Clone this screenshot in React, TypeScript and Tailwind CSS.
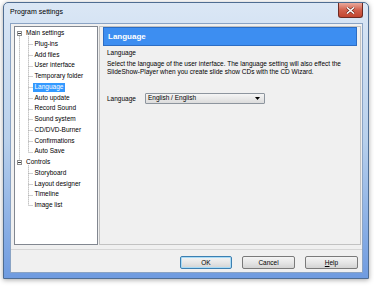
import React from "react";

const MAIN_ITEMS = [
  "Plug-ins",
  "Add files",
  "User interface",
  "Temporary folder",
  "Language",
  "Auto update",
  "Record Sound",
  "Sound system",
  "CD/DVD-Burner",
  "Confirmations",
  "Auto Save",
];

const CONTROL_ITEMS = ["Storyboard", "Layout designer", "Timeline", "Image list"];

const ROW = 10.75;
const TOP = 1;

type Row = { label: string; level: number };

const ROWS: Row[] = [
  { label: "Main settings", level: 0 },
  ...MAIN_ITEMS.map((label) => ({ label, level: 1 })),
  { label: "Controls", level: 0 },
  ...CONTROL_ITEMS.map((label) => ({ label, level: 1 })),
];

const cy = (i: number) => TOP + ROW * i + ROW / 2;

function TreeLines() {
  const controlsIdx = MAIN_ITEMS.length + 1;
  const last = ROWS.length - 1;
  const dots = { stroke: "#a3a3a3", strokeWidth: 1, strokeDasharray: "1 1" };
  return (
    <svg className="absolute left-0 top-0 pointer-events-none" width="82" height="217">
      <line x1="4.5" y1={cy(0) + 3} x2="4.5" y2={cy(controlsIdx) - 3} {...dots} />
      <line x1="13.5" y1={cy(0) + 3} x2="13.5" y2={cy(controlsIdx - 1)} {...dots} />
      <line x1="13.5" y1={cy(controlsIdx) + 3} x2="13.5" y2={cy(last)} {...dots} />
      {ROWS.map((r, i) =>
        r.level === 1 ? (
          <line key={i} x1="13.5" y1={Math.round(cy(i)) + 0.5} x2="18" y2={Math.round(cy(i)) + 0.5} {...dots} />
        ) : null
      )}
    </svg>
  );
}

function Tree() {
  return (
    <div className="relative w-[84px] h-[219px] border border-[#828790] bg-white">
      <TreeLines />
      <div className="relative pt-[1px]">
        {ROWS.map((r) =>
          r.level === 0 ? (
            <div key={r.label} className="h-[10.75px] flex items-center">
              <div className="ml-[2px] w-[5px] h-[5px] border border-[#8f8f8f] bg-white flex items-center justify-center">
                <div className="w-[3px] h-[1px] bg-[#3f3f3f]" />
              </div>
              <span className="ml-[4px] leading-none">{r.label}</span>
            </div>
          ) : (
            <div key={r.label} className="h-[10.75px] flex items-center pl-[17.5px]">
              <span
                className={
                  r.label === "Language"
                    ? "px-[2px] h-[9px] flex items-center bg-[#3399ff] text-white"
                    : "px-[2px] leading-none"
                }
              >
                {r.label}
              </span>
            </div>
          )
        )}
      </div>
    </div>
  );
}

function Button({ children, primary }: { children: React.ReactNode; primary?: boolean }) {
  return (
    <div
      className={
        "h-[13px] rounded-[2px] border flex items-center justify-center bg-gradient-to-b from-[#f4f4f4] via-[#e6e6e6] to-[#d4d4d4] " +
        (primary ? "w-[52px] border-[#3c7fb1] shadow-[inset_0_0_0_1px_#a9dbf6]" : "w-[53px] border-[#7a7a7a]")
      }
    >
      {children}
    </div>
  );
}

export default function App() {
  return (
    <div
      className="w-[374px] h-[286px] bg-white overflow-hidden pt-[2px] pl-[3px] text-[6.5px] text-black"
      style={{ fontFamily: '"Liberation Sans", Arial, sans-serif' }}
    >
      <div className="w-[366px] h-[277px] rounded-t-[5px] border border-[#4f6d92] bg-gradient-to-b from-[#dbe7f5] via-[#b8d0ec] to-[#6f9be0] shadow-[0_1px_5px_rgba(0,0,0,0.35)] flex flex-col">
        {/* title bar */}
        <div className="h-[20px] flex items-start justify-between pl-[6px] pr-[5px]">
          <span className="mt-[5px] text-[7px] leading-none">Program settings</span>
          <div className="w-[25px] h-[15px] rounded-b-[3px] border border-t-0 border-[#6e2a22] bg-gradient-to-b from-[#e9a99c] via-[#d2604c] to-[#c1452f] flex items-center justify-center">
            <svg width="9" height="7" viewBox="0 0 9 7">
              <path d="M1 0.5 L8 6.5 M8 0.5 L1 6.5" stroke="#5a1a12" strokeWidth="2.6" />
              <path d="M1 0.5 L8 6.5 M8 0.5 L1 6.5" stroke="#ffffff" strokeWidth="1.6" />
            </svg>
          </div>
        </div>

        {/* client area */}
        <div className="mx-[6px] mr-[5px] h-[250px] bg-[#f0f0f0] border border-[#8aa3c4] flex flex-col">
          <div className="flex pt-[2px] pl-[3px] pr-[1px] gap-[1px]">
            <Tree />
            <div className="flex-1 h-[219px] border border-[#c2c2c2] px-[3px]">
              <div className="h-[19px] border border-[#2c6dc4] bg-[#3d8ef1] flex items-center pl-[4px] text-white font-bold text-[8px]">
                Language
              </div>
              <div className="pl-[4px] pr-[6px]">
                <div className="mt-[3px] leading-[8px]">Language</div>
                <p className="mt-[3px] leading-[8px]">
                  Select the language of the user interface. The language setting will also effect the SlideShow-Player
                  when you create slide show CDs with the CD Wizard.
                </p>
                <div className="mt-[17px] flex items-center">
                  <span className="w-[38px]">Language</span>
                  <div className="w-[120px] h-[11px] border border-[#8d959e] rounded-[1px] bg-gradient-to-b from-[#f5f5f5] to-[#dcdcdc] flex items-center justify-between pl-[2px] pr-[4px]">
                    <span className="leading-none">English / English</span>
                    <svg width="5" height="3" viewBox="0 0 5 3">
                      <path d="M0 0 H5 L2.5 3 Z" fill="#000" />
                    </svg>
                  </div>
                </div>
              </div>
            </div>
          </div>

          <div className="mt-[4px] border-t border-[#d6d6d6]" />
          <div className="pt-[6px] pr-[4px] flex justify-end gap-[10px]">
            <Button primary>OK</Button>
            <Button>Cancel</Button>
            <Button>
              <span>
                <span className="underline">H</span>elp
              </span>
            </Button>
          </div>
        </div>
      </div>
    </div>
  );
}
